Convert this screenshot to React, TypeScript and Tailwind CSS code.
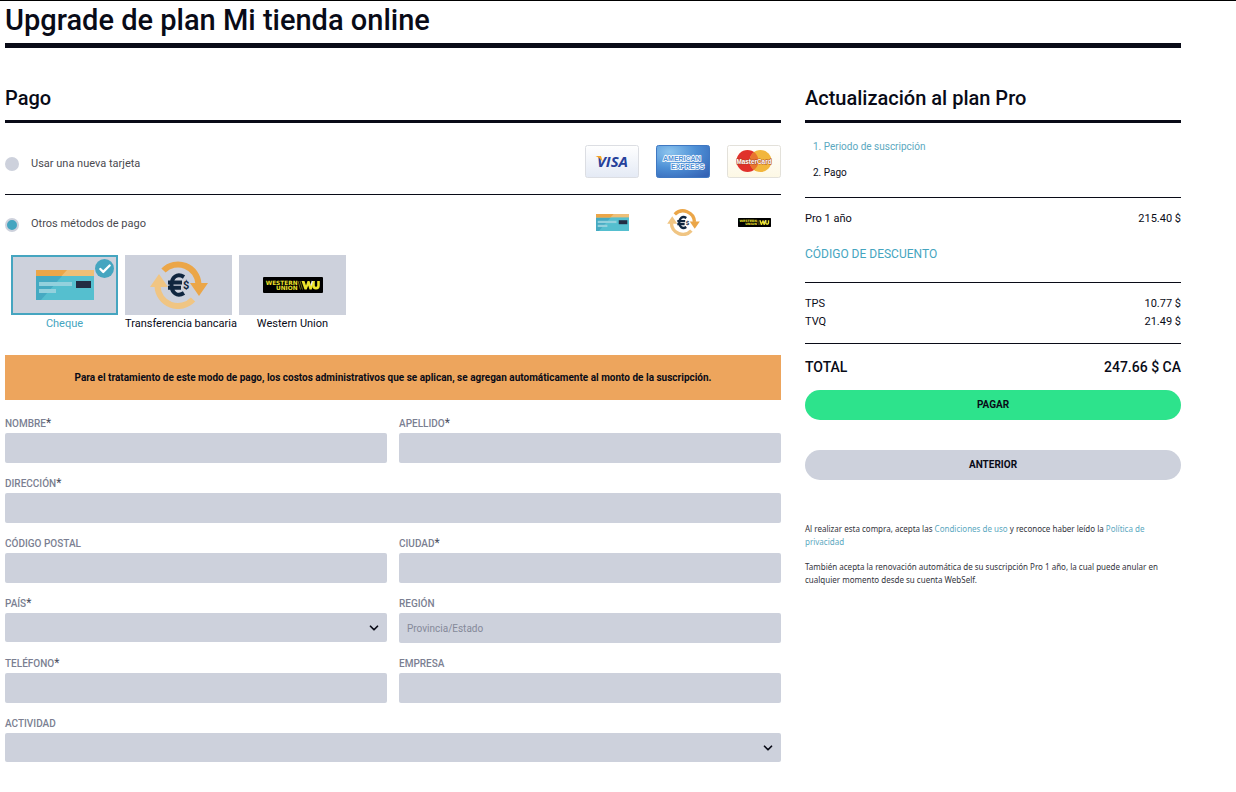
import { Check, ChevronDown } from "lucide-react";
import { useState } from "react";
import type { ReactNode } from "react";

function VisaCard() {
  return (
    <svg className="h-[33px] w-[54px]" viewBox="0 0 54 33" role="img" aria-label="Visa">
      <defs>
        <linearGradient id="visa-bg" x1="0" y1="0" x2="0" y2="1">
          <stop offset="0" stopColor="#ffffff" />
          <stop offset="1" stopColor="#e4eaf5" />
        </linearGradient>
      </defs>
      <rect x="0.5" y="0.5" width="53" height="32" rx="2" fill="url(#visa-bg)" stroke="#dcdee3" />
      <text
        x="27.5"
        y="22"
        textAnchor="middle"
        fill="#25409a"
        fontFamily="Open Sans, sans-serif"
        fontSize="15"
        fontWeight="700"
        fontStyle="italic"
      >
        VISA
      </text>
      <path d="M10.5 11h5.5l2 6.500c-1.500-2.800-4-5.300-7.500-6.500z" fill="#f5a623" />
    </svg>
  );
}

function AmexCard() {
  return (
    <svg className="h-[33px] w-[54px]" viewBox="0 0 54 33" role="img" aria-label="American Express">
      <defs>
        <radialGradient id="amex-bg" cx="0.25" cy="0.2" r="1">
          <stop offset="0" stopColor="#8cc4ee" />
          <stop offset="0.5" stopColor="#4d90d6" />
          <stop offset="1" stopColor="#3463b5" />
        </radialGradient>
      </defs>
      <rect x="0.5" y="0.5" width="53" height="32" rx="2" fill="url(#amex-bg)" stroke="#3f78c2" />
      <g
        fill="#4d90d6"
        stroke="#ffffff"
        strokeWidth="1.6"
        paintOrder="stroke"
        fontFamily="Liberation Sans, sans-serif"
        fontSize="7"
        fontWeight="700"
      >
        <text x="7" y="16">AMERICAN</text>
        <text x="15" y="24">EXPRESS</text>
      </g>
    </svg>
  );
}

function MasterCard() {
  return (
    <svg className="h-[33px] w-[54px]" viewBox="0 0 54 33" role="img" aria-label="MasterCard">
      <defs>
        <linearGradient id="mc-bg" x1="0" y1="0" x2="0" y2="1">
          <stop offset="0" stopColor="#ffffff" />
          <stop offset="1" stopColor="#fdf8e4" />
        </linearGradient>
      </defs>
      <rect x="0.5" y="0.5" width="53" height="32" rx="2" fill="url(#mc-bg)" stroke="#e3e1da" />
      <circle cx="20.5" cy="16" r="11" fill="#e0312b" />
      <circle cx="33.5" cy="16" r="11" fill="#f2b63c" />
      <path d="M27 7.100a11 11 0 0 1 0 17.800a11 11 0 0 1 0-17.800z" fill="#e8752f" />
      <text
        x="27"
        y="18.5"
        textAnchor="middle"
        fill="#ffffff"
        stroke="#a8431f"
        strokeWidth="0.8"
        paintOrder="stroke"
        fontFamily="Liberation Sans, sans-serif"
        fontSize="6.4"
        fontWeight="700"
      >
        MasterCard
      </text>
    </svg>
  );
}

function ChequeIcon({ className }: { className: string }) {
  return (
    <svg className={className} viewBox="0 0 58 30" preserveAspectRatio="none" aria-hidden="true">
      <rect width="58" height="30" fill="#55bfcf" />
      <path d="M0 6h26L5 30H0z" fill="#45aac2" />
      <rect width="58" height="6" fill="#eebf77" />
      <path d="M0 0h31l-5.500 6H0z" fill="#eba648" />
      <rect x="3" y="12" width="33" height="4" fill="#93d1dd" />
      <rect x="3" y="19" width="17" height="4" fill="#93d1dd" />
      <rect x="40" y="11" width="15" height="7" fill="#232c43" />
    </svg>
  );
}

function TransferIcon({ className }: { className: string }) {
  return (
    <svg className={className} viewBox="0 0 58 48" aria-hidden="true">
      <path d="M13.500 9.500A20.500 20.500 0 0 1 48.500 23" fill="none" stroke="#eba648" strokeWidth="6" />
      <path d="M40 22h18l-9 13z" fill="#eba648" />
      <path d="M43 38.500A20.500 20.500 0 0 1 7.500 25" fill="none" stroke="#f0c583" strokeWidth="6" />
      <path d="M0 26h18L9 13z" fill="#f0c583" />
      <path
        d="M34 16C27 11.500 21.500 16.500 21.500 24S27 36.500 34 32M18 21.500h14M18 26.800h13"
        fill="none"
        stroke="#10263f"
        strokeWidth="4"
      />
      <text x="33" y="28" fill="#10263f" fontFamily="Roboto, sans-serif" fontSize="11" fontWeight="700">
        $
      </text>
    </svg>
  );
}

function WesternUnionIcon({ className }: { className: string }) {
  return (
    <svg className={className} viewBox="0 0 60 16" aria-hidden="true">
      <rect width="60" height="16" rx="1" fill="#000000" />
      <g fill="#ece32d" fontFamily="DejaVu Sans, sans-serif" fontWeight="700" fontSize="5.8" textAnchor="end">
        <text x="34.5" y="7.5">WESTERN</text>
        <text x="34.5" y="12.5">UNION</text>
      </g>
      <path d="M35 4l2.500 8.500M37 4l2.500 8.500" stroke="#a8a222" strokeWidth="0.7" />
      <path d="M38.500 4h3l1.500 4.500L44.500 4h2l1.500 4.500L49.500 4h2l-2.800 8.500h-2.200l-1.300-4-1.500 4h-2.200z" fill="#ece32d" />
      <path d="M50.500 4v4.500c0 3.500 5 3.500 5 0V4" fill="none" stroke="#ece32d" strokeWidth="2.6" />
      <path d="M49.300 4l-1.300 4.500" stroke="#e9e9e9" strokeWidth="1.4" />
    </svg>
  );
}

const methods = [
  { id: "cheque", name: "Cheque", icon: <ChequeIcon className="h-[30px] w-[58px]" /> },
  { id: "transfer", name: "Transferencia bancaria", icon: <TransferIcon className="h-12 w-[58px]" /> },
  { id: "wu", name: "Western Union", icon: <WesternUnionIcon className="h-4 w-[60px]" /> },
];

type FieldProps = {
  id: string;
  label: string;
  required?: boolean;
  wide?: boolean;
  select?: boolean;
  placeholder?: string;
};

const fields: FieldProps[] = [
  { id: "nombre", label: "NOMBRE", required: true },
  { id: "apellido", label: "APELLIDO", required: true },
  { id: "direccion", label: "DIRECCIÓN", required: true, wide: true },
  { id: "cp", label: "CÓDIGO POSTAL" },
  { id: "ciudad", label: "CIUDAD", required: true },
  { id: "pais", label: "PAÍS", required: true, select: true },
  { id: "region", label: "REGIÓN", placeholder: "Provincia/Estado" },
  { id: "telefono", label: "TELÉFONO", required: true },
  { id: "empresa", label: "EMPRESA" },
  { id: "actividad", label: "ACTIVIDAD", wide: true, select: true },
];

function Field({ id, label, required, wide, select, placeholder }: FieldProps) {
  return (
    <div className={wide ? "col-span-2 h-[60px]" : "h-[60px]"}>
      <label htmlFor={id} className="flex h-[18px] text-[10px] leading-[18px] font-medium text-[#7b7f92]">
        {label}
        {required && <span className="text-xs leading-4 font-normal text-[#4a4d5c]">*</span>}
      </label>
      {select ? (
        <div className="relative">
          <select id={id} className="block h-[29px] w-full appearance-none rounded-xs bg-[#cdd1dc] px-2 text-[10px]" />
          <ChevronDown
            className="pointer-events-none absolute top-2 right-1.5 size-3.5 text-[#090b17]"
            strokeWidth={3}
            aria-hidden="true"
          />
        </div>
      ) : (
        <input
          id={id}
          type="text"
          placeholder={placeholder}
          className="block h-[30px] w-full rounded-xs bg-[#cdd1dc] px-2 text-[10px] placeholder:text-[#858999]"
        />
      )}
    </div>
  );
}

type PaymentOptionProps = {
  label: string;
  checked: boolean;
  onChange: () => void;
  children: ReactNode;
};

function PaymentOption({ label, checked, onChange, children }: PaymentOptionProps) {
  return (
    <div className="flex items-center justify-between">
      <label className="flex items-center gap-3 pt-[5px] text-[11px] text-[#4a4a4f]">
        <input
          type="radio"
          name="payment"
          checked={checked}
          onChange={onChange}
          className="size-3.5 appearance-none rounded-full border-2 border-[#cdd1dc] bg-[#cdd1dc] checked:bg-[#45a5c0]"
        />
        {label}
      </label>
      <div className="flex items-center gap-[17px]">{children}</div>
    </div>
  );
}

export default function App() {
  const [payment, setPayment] = useState("other");
  const [method, setMethod] = useState("cheque");

  return (
    <div className="border-t border-black bg-white pr-[55px] pb-7 pl-[5px] font-[Roboto,sans-serif] text-[#090b17]">
      <h1 className="border-b-5 border-[#090b17] pt-px pb-[5px] text-[29px] leading-9 font-medium">
        Upgrade de plan Mi tienda online
      </h1>

      <div className="grid grid-cols-3 items-start gap-6 pt-8">
        <main className="col-span-2">
          <h2 className="border-b-3 border-[#090b17] pt-1 pb-2 text-xl leading-7 font-medium">Pago</h2>

          <div className="border-b border-[#090b17] pt-[22px] pb-4">
            <PaymentOption
              label="Usar una nueva tarjeta"
              checked={payment === "card"}
              onChange={() => setPayment("card")}
            >
              <VisaCard />
              <AmexCard />
              <MasterCard />
            </PaymentOption>
          </div>

          <div className="pt-[11px]">
            <PaymentOption
              label="Otros métodos de pago"
              checked={payment === "other"}
              onChange={() => setPayment("other")}
            >
              <div className="flex h-8 w-[54px] items-center justify-center">
                <ChequeIcon className="h-[17px] w-[33px]" />
              </div>
              <div className="flex h-8 w-[54px] items-center justify-center">
                <TransferIcon className="h-[27px] w-[33px]" />
              </div>
              <div className="flex h-8 w-[54px] items-center justify-center">
                <WesternUnionIcon className="h-[11px] w-[33px]" />
              </div>
            </PaymentOption>
          </div>

          <div className="flex gap-[7px] px-1.5 pt-[17px]">
            {methods.map((item) => {
              const active = item.id === method;
              return (
                <label key={item.id} className="relative w-[107px] text-center text-[11px] leading-[18px]">
                  <input
                    type="radio"
                    name="method"
                    checked={active}
                    onChange={() => setMethod(item.id)}
                    className="sr-only"
                  />
                  <span
                    className={
                      active
                        ? "flex h-[60px] items-center justify-center border-2 border-[#45a5c0] bg-[#cdd1dc]"
                        : "flex h-[60px] items-center justify-center bg-[#cdd1dc]"
                    }
                  >
                    {item.icon}
                  </span>
                  {active && (
                    <span className="absolute top-1 right-1 flex size-[19px] items-center justify-center rounded-full bg-[#45a5c0] text-white">
                      <Check className="size-3.5" strokeWidth={4} aria-hidden="true" />
                    </span>
                  )}
                  <span className={active ? "block whitespace-nowrap text-[#45a5c0]" : "block whitespace-nowrap"}>
                    {item.name}
                  </span>
                </label>
              );
            })}
          </div>

          <p className="mt-[22px] bg-[#eda55d] px-4 py-3.5 text-center text-[10px] leading-[17px] font-bold">
            Para el tratamiento de este modo de pago, los costos administrativos que se aplican, se agregan
            automáticamente al monto de la suscripción.
          </p>

          <form className="mt-[15px] grid grid-cols-2 gap-x-3">
            {fields.map((field) => (
              <Field key={field.id} {...field} />
            ))}
          </form>
        </main>

        <aside>
          <h2 className="border-b-3 border-[#090b17] pt-1 pb-2 text-xl leading-7 font-medium">
            Actualización al plan Pro
          </h2>

          <ol className="flex flex-col gap-2.5 border-b border-[#090b17] px-2 pt-4 pb-4 text-[10px] leading-4">
            <li>
              <a href="#periodo" className="text-[#5ba8c0]">1. Periodo de suscripción</a>
            </li>
            <li>2. Pago</li>
          </ol>

          <div className="border-b border-[#090b17] pt-3 pb-[19px] text-[11px] leading-[18px]">
            <p className="flex justify-between">
              <span>Pro 1 año</span>
              <span>215.40 $</span>
            </p>
            <a href="#descuento" className="mt-[17px] block text-xs leading-[18px] text-[#45a5c0]">
              CÓDIGO DE DESCUENTO
            </a>
          </div>

          <div className="border-b border-[#090b17] py-3">
            <table className="w-full text-[11px] leading-[18px]">
              <tbody>
                <tr>
                  <th scope="row" className="text-left font-normal">TPS</th>
                  <td className="text-right">10.77 $</td>
                </tr>
                <tr>
                  <th scope="row" className="text-left font-normal">TVQ</th>
                  <td className="text-right">21.49 $</td>
                </tr>
              </tbody>
            </table>
          </div>

          <p className="flex justify-between pt-[13px] text-sm leading-5 font-medium">
            <span>TOTAL</span>
            <span>247.66 $ CA</span>
          </p>

          <button
            type="button"
            className="mt-[13px] block h-[30px] w-full rounded-full bg-[#2de38c] pb-0.5 text-[10px] font-bold"
          >
            PAGAR
          </button>
          <button
            type="button"
            className="mt-[30px] block h-[30px] w-full rounded-full bg-[#cdd1dc] pb-0.5 text-[10px] font-bold"
          >
            ANTERIOR
          </button>

          <div className="mt-[42px] flex flex-col gap-3 font-['Noto_Sans',sans-serif] text-[8px] leading-[13px] text-[#33343c]">
            <p>
              Al realizar esta compra, acepta las{" "}
              <a href="#condiciones" className="text-[#5ba8c0]">Condiciones de uso</a> y reconoce haber leído la{" "}
              <a href="#privacidad" className="text-[#5ba8c0]">Política de privacidad</a>
            </p>
            <p>
              También acepta la renovación automática de su suscripción Pro 1 año, la cual puede anular en
              cualquier momento desde su cuenta WebSelf.
            </p>
          </div>
        </aside>
      </div>
    </div>
  );
}
